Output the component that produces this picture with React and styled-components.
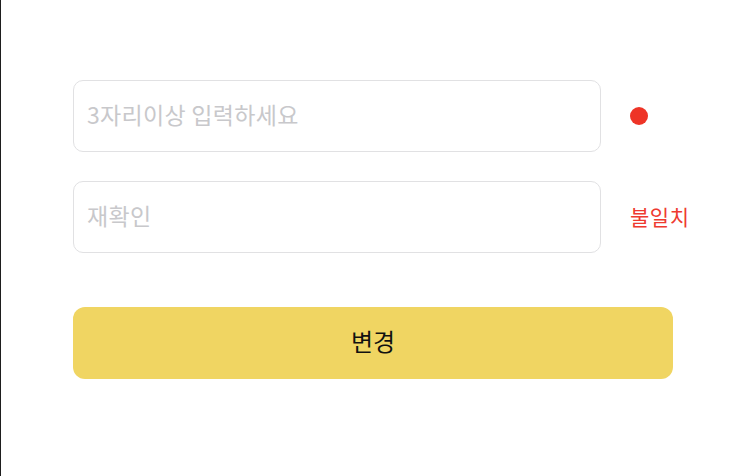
import React from 'react';
import styled, { createGlobalStyle } from 'styled-components';

const GlobalStyle = createGlobalStyle`
  html, body {
    margin: 0;
    padding: 0;
    background: #ffffff;
  }
  body {
    font-family: "Noto Sans CJK KR", "Noto Sans", sans-serif;
  }
`;

const Page = styled.div`
  box-sizing: border-box;
  height: 476px;
  border-left: 1px solid #1e1e1e;
  padding: 80px 0 0 72px;
  display: flex;
  flex-direction: column;
`;

const Row = styled.div`
  display: flex;
  align-items: center;
  margin-bottom: ${(p) => p.$gap}px;
`;

const Input = styled.input`
  box-sizing: border-box;
  width: 528px;
  height: 72px;
  border: 1px solid #e1e1e3;
  border-radius: 10px;
  padding: 0 14px 5px 13px;
  font-family: "Noto Sans CJK KR", sans-serif;
  font-size: 23px;
  letter-spacing: 0.3px;
  color: #222;
  outline: none;

  &::placeholder {
    color: #c8c8cb;
  }
`;

const Status = styled.div`
  margin-left: 29px;
  display: flex;
  align-items: center;
`;

const Dot = styled.span`
  display: block;
  width: 18px;
  height: 18px;
  border-radius: 50%;
  background: #ee3427;
`;

const Mismatch = styled.span`
  font-size: 21px;
  color: #ee3a30;
  letter-spacing: 0.5px;
  margin-top: -3px;
`;

const SubmitButton = styled.button`
  box-sizing: border-box;
  width: 600px;
  height: 72px;
  border: none;
  border-radius: 12px;
  padding: 0 0 5px;
  background: #f0d562;
  font-family: "Noto Sans CJK KR", sans-serif;
  font-size: 24px;
  color: #111;
  cursor: pointer;
`;

export default function App() {
  return (
    <>
      <GlobalStyle />
      <Page>
        <Row $gap={29}>
          <Input type="password" placeholder="3자리이상 입력하세요" />
          <Status>
            <Dot />
          </Status>
        </Row>
        <Row $gap={54}>
          <Input type="password" placeholder="재확인" />
          <Status>
            <Mismatch>불일치</Mismatch>
          </Status>
        </Row>
        <SubmitButton>변경</SubmitButton>
      </Page>
    </>
  );
}
